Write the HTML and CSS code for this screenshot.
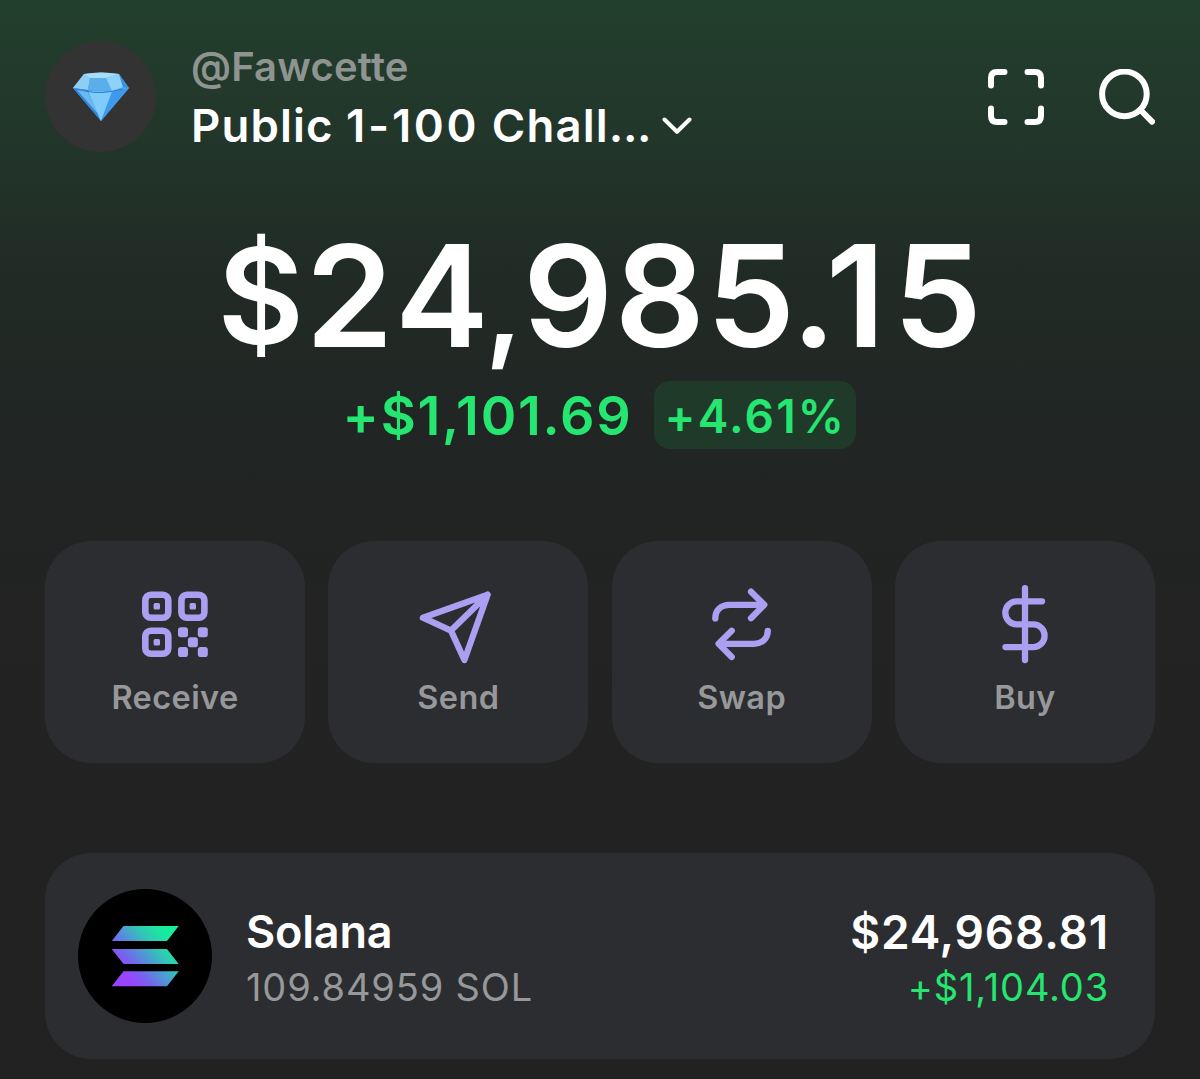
FILE: index.html
```html
<!DOCTYPE html>
<html lang="en">
<head>
    <meta charset="UTF-8">
    <meta name="viewport" content="width=device-width, initial-scale=1.0">
    <title>Wallet</title>
    <link rel="stylesheet" href="styles.css">
</head>
<body>
    <div class="wallet">
        <!-- Header -->
        <header class="header">
            <div class="avatar">
                <svg width="56" height="50" viewBox="0 0 56 50">
                    <path d="M11 2 Q28 -1 46 2 L56 16 L28 49 L0 16 Z" fill="#4fa9ee"/>
                    <path d="M11 2 L17 6 L15 18 L0 16 Z" fill="#8fcdf5"/>
                    <path d="M17 6 L32 6 L39 19 L15 18 Z" fill="#5aaeea"/>
                    <path d="M11 2 Q28 -1 46 2 L33 6 L17 6 Z" fill="#a9dcf7"/>
                    <path d="M46 2 L33 6 L39 19 L50 15 Z" fill="#8ed2fa"/>
                    <path d="M46 2 L56 16 L50 15 Z" fill="#3c8fdf"/>
                    <path d="M0 16 L15 18 L28 49 Z" fill="#2f86dc"/>
                    <path d="M4 18 L15 20 L26 43 Z" fill="#69b8f0"/>
                    <path d="M15 19 L39 20 L28 49 Z" fill="#7fcbfa"/>
                    <path d="M39 20 L56 16 L28 49 Z" fill="#3e9aec"/>
                    <path d="M13 19 Q27 23 50 17" fill="none" stroke="#2d7fca" stroke-width="1"/>
                </svg>
            </div>
            <div class="account">
                <div class="handle">@Fawcette</div>
                <div class="account-name">
                    <span class="name-text">Public <span class="name-digits">1-100</span> Chall<span class="dots">...</span></span>
                    <svg class="chevron" width="30" height="18" viewBox="0 0 30 18">
                        <path d="M2.5 2.5 L15 14.8 L27.5 2.5"/>
                    </svg>
                </div>
            </div>
            <div class="header-icons">
                <svg width="56" height="56" viewBox="0 0 56 56">
                    <path d="M3 16.5 V9 Q3 3 9 3 H16.5 M39.5 3 H47 Q53 3 53 9 V16.5 M53 39.5 V47 Q53 53 47 53 H39.5 M16.5 53 H9 Q3 53 3 47 V39.5"/>
                </svg>
                <svg width="56" height="56" viewBox="0 0 56 56">
                    <circle cx="25.4" cy="24.9" r="22.3"/>
                    <path d="M41.5 41 L53 52.7"/>
                </svg>
            </div>
        </header>

        <!-- Balance -->
        <section class="balance">
            <div class="total"><span class="currency">$</span>2<span class="tight">4</span><span class="comma">,</span>98<span class="tight">5</span><span class="point">.</span><span class="one">1</span>5</div>
            <div class="change">
                <span class="change-amount">+$1,101.69</span>
                <span class="change-percent">+4.61%</span>
            </div>
        </section>

        <!-- Actions -->
        <nav class="actions">
            <div class="action">
                <svg class="qr" width="80" height="80" viewBox="0 0 80 80">
                    <g class="line">
                        <rect x="10.3" y="9.8" width="23" height="23" rx="5.5"/>
                        <rect x="46.4" y="9.8" width="23" height="23" rx="5.5"/>
                        <rect x="10.3" y="45.8" width="23" height="23" rx="5.5"/>
                    </g>
                    <rect x="18.6" y="18.1" width="6.4" height="6.4" rx="1.5"/>
                    <rect x="54.6" y="18.1" width="6.4" height="6.4" rx="1.5"/>
                    <rect x="18.6" y="54.1" width="6.4" height="6.4" rx="1.5"/>
                    <rect x="43" y="42.3" width="10" height="10" rx="2.8"/>
                    <rect x="62.8" y="42.3" width="10" height="10" rx="2.8"/>
                    <rect x="52.9" y="52.2" width="10" height="10" rx="2.8"/>
                    <rect x="43" y="62.1" width="10" height="10" rx="2.8"/>
                    <rect x="62.8" y="62.1" width="10" height="10" rx="2.8"/>
                </svg>
                <span class="action-label">Receive</span>
            </div>
            <div class="action">
                <svg width="80" height="80" viewBox="0 0 80 80">
                    <path d="M4.9 32.7 L69.6 9.7 L46.4 75 L33 45.6 Z M33 45.6 L69.6 9.7"/>
                </svg>
                <span class="action-label">Send</span>
            </div>
            <div class="action">
                <svg width="80" height="80" viewBox="0 0 80 80">
                    <path d="M13.3 33.4 C13.3 25 19 19.8 27.5 19.8 H62 M49 6.7 L62.3 19.8 L49 33.2"/>
                    <path d="M65.8 45.8 C65.8 53.5 60 58.8 52 58.8 H18 M29.7 45.8 L16.6 58.8 L29.7 72"/>
                </svg>
                <span class="action-label">Swap</span>
            </div>
            <div class="action">
                <svg width="80" height="80" viewBox="0 0 80 80">
                    <path d="M40 3.2 V75 M57 16.3 H31.8 A11.5 11.5 0 0 0 31.8 39.3 H48.2 A11.4 11.4 0 0 1 48.2 62.1 H20.5"/>
                </svg>
                <span class="action-label">Buy</span>
            </div>
        </nav>

        <!-- Tokens -->
        <section class="token">
            <svg class="token-logo" width="134" height="134" viewBox="0 0 134 134">
                <defs>
                    <linearGradient id="sol" gradientUnits="userSpaceOnUse" x1="100" y1="37" x2="33" y2="96">
                        <stop offset="0" stop-color="#14f195"/>
                        <stop offset="0.18" stop-color="#1ae8a0"/>
                        <stop offset="0.34" stop-color="#2fcab4"/>
                        <stop offset="0.5" stop-color="#4f98d6"/>
                        <stop offset="0.66" stop-color="#7564ec"/>
                        <stop offset="0.8" stop-color="#9945ff"/>
                    </linearGradient>
                </defs>
                <circle cx="67" cy="67" r="67" fill="#000"/>
                <path fill="url(#sol)" d="M45.5 37 H100.7 L89 52 H33.7 Z M33.7 60 H89 L100.7 75 H45.5 Z M45.5 82.3 H100.7 L89 97.3 H33.7 Z"/>
            </svg>
            <div class="token-info">
                <div class="token-name">Solana</div>
                <div class="token-amount">109.84959 SOL</div>
            </div>
            <div class="token-value">
                <div class="token-price">$24,968.81</div>
                <div class="token-change">+$1,104.03</div>
            </div>
        </section>
    </div>
</body>
</html>
```
FILE: styles.css
```css
* {
    box-sizing: border-box;
}
body {
    margin: 0;
    background-color: #222222;
    font-family: Inter, "Liberation Sans", sans-serif;
    color: #ffffff;
}
.wallet {
    height: 1079px;
    padding: 41px 45px 0;
    overflow: hidden;
    white-space: nowrap;
    background: linear-gradient(#223f2d 0px, #22352a 150px, #212b26 270px, #212523 450px, #222322 620px, #222222 850px);
}

/* Header */
.header {
    display: flex;
    height: 112px;
}
.avatar {
    display: flex;
    align-items: center;
    justify-content: center;
    width: 111px;
    height: 111px;
    border-radius: 50%;
    background-color: #333333;
}
.account {
    padding: 0 0 0 35px;
}
.handle {
    height: 51px;
    line-height: 51px;
    font-size: 40px;
    font-weight: 600;
    letter-spacing: 0.2px;
    color: #8f9490;
}
.account-name {
    display: flex;
    align-items: center;
    height: 67px;
    font-size: 45.5px;
    font-weight: 600;
    letter-spacing: 1.1px;
    line-height: 67px;
}
.name-digits {
    letter-spacing: 2.7px;
}
.dots {
    letter-spacing: -0.3px;
}
.chevron {
    margin-left: 11px;
    fill: none;
    stroke: #ffffff;
    stroke-width: 4;
    stroke-linecap: round;
    stroke-linejoin: round;
}
.header-icons {
    display: flex;
    gap: 55px;
    margin-left: auto;
    padding-top: 28px;
}
.header-icons svg {
    fill: none;
    stroke: #ffffff;
    stroke-width: 6;
    stroke-linecap: round;
    stroke-linejoin: round;
}

/* Balance */
.balance {
    display: flex;
    flex-direction: column;
    align-items: center;
    height: 388px;
    padding-top: 58px;
}
.total {
    height: 170px;
    padding-left: 1px;
    line-height: 170px;
    font-size: 141px;
    font-weight: 600;
    letter-spacing: 1.5px;
}
.total .currency {
    font-size: 133px;
    line-height: 1;
    vertical-align: 3px;
}
.total .tight {
    letter-spacing: -4px;
}
.total .comma {
    font-size: 120px;
    letter-spacing: 0;
    line-height: 1;
}
.total .point {
    letter-spacing: -10.5px;
}
.total .one {
    letter-spacing: 8px;
}
.change {
    display: flex;
    align-items: center;
    gap: 22px;
    height: 68px;
    margin-right: 1px;
    color: #25e671;
}
.change-amount {
    padding-top: 1px;
    font-size: 54px;
    font-weight: 600;
    letter-spacing: 1.7px;
}
.change-percent {
    width: 202px;
    height: 68px;
    border-radius: 16px;
    background-color: #203a2a;
    font-size: 46px;
    font-weight: 600;
    letter-spacing: 2.2px;
    line-height: 70px;
    text-align: center;
}

/* Actions */
.actions {
    display: grid;
    grid-template-columns: repeat(4, 1fr);
    gap: 23.4px;
}
.action {
    display: flex;
    flex-direction: column;
    align-items: center;
    height: 222px;
    padding-top: 44px;
    border-radius: 46px;
    background-color: #2c2d30;
}
.action svg {
    fill: none;
    stroke: #ab9ff2;
    stroke-width: 6.3;
    stroke-linecap: round;
    stroke-linejoin: round;
}
.action .qr {
    fill: #ab9ff2;
    stroke: none;
}
.qr .line {
    fill: none;
    stroke: #ab9ff2;
    stroke-width: 6.6;
}
.action-label {
    line-height: 66px;
    font-size: 32.5px;
    font-weight: 600;
    letter-spacing: 0.4px;
    color: #97989a;
}

/* Tokens */
.token {
    display: flex;
    align-items: center;
    height: 206px;
    margin-top: 90px;
    padding: 0 46px 0 33px;
    border-radius: 46px;
    background-color: #2c2d30;
}
.token-info {
    padding: 2px 0 0 34px;
}
.token-name,
.token-price {
    line-height: 60px;
    font-size: 45px;
    font-weight: 600;
    letter-spacing: -0.2px;
}
.token-price {
    font-size: 46px;
    letter-spacing: 0.8px;
}
.token-amount,
.token-change {
    line-height: 50px;
    font-size: 38px;
    letter-spacing: 0.85px;
    color: #97989a;
}
.token-value {
    margin-left: auto;
    padding-top: 2px;
    text-align: right;
}
.token-change {
    color: #25e671;
}
```
